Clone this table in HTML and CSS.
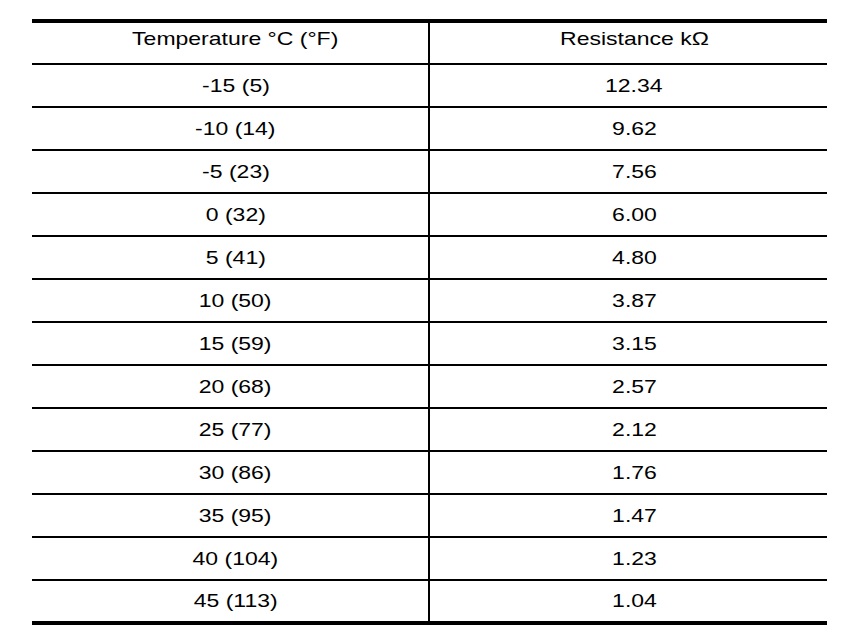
FILE: index.html
```html
<!DOCTYPE html>
<html>
<head>
<meta charset="utf-8">
<link rel="stylesheet" href="styles.css">
</head>
<body>
<table class="spec">
  <thead>
    <tr><th><span class="t">Temperature °C (°F)</span></th><th><span class="t">Resistance kΩ</span></th></tr>
  </thead>
  <tbody>
    <tr><td><span class="t">-15 (5)</span></td><td><span class="t">12.34</span></td></tr>
    <tr><td><span class="t">-10 (14)</span></td><td><span class="t">9.62</span></td></tr>
    <tr><td><span class="t">-5 (23)</span></td><td><span class="t">7.56</span></td></tr>
    <tr><td><span class="t">0 (32)</span></td><td><span class="t">6.00</span></td></tr>
    <tr><td><span class="t">5 (41)</span></td><td><span class="t">4.80</span></td></tr>
    <tr><td><span class="t">10 (50)</span></td><td><span class="t">3.87</span></td></tr>
    <tr><td><span class="t">15 (59)</span></td><td><span class="t">3.15</span></td></tr>
    <tr><td><span class="t">20 (68)</span></td><td><span class="t">2.57</span></td></tr>
    <tr><td><span class="t">25 (77)</span></td><td><span class="t">2.12</span></td></tr>
    <tr><td><span class="t">30 (86)</span></td><td><span class="t">1.76</span></td></tr>
    <tr><td><span class="t">35 (95)</span></td><td><span class="t">1.47</span></td></tr>
    <tr><td><span class="t">40 (104)</span></td><td><span class="t">1.23</span></td></tr>
    <tr class="last"><td><span class="t">45 (113)</span></td><td><span class="t">1.04</span></td></tr>
  </tbody>
</table>
</body>
</html>
```

FILE: styles.css
```css
html, body {
  margin: 0;
  padding: 0;
  background: #ffffff;
}

body {
  font-family: "Liberation Sans", Arial, sans-serif;
  font-size: 19px;
  color: #000000;
}

.spec {
  margin: 19px 0 0 32px;
  width: 795px;
  table-layout: fixed;
  border-collapse: separate;
  border-spacing: 0;
}

.spec th,
.spec td {
  box-sizing: border-box;
  padding: 0 0 0 11px;
  text-align: center;
  font-weight: normal;
  line-height: 41px;
  border-bottom: 2px solid #000;
  white-space: nowrap;
}

.spec th:first-child,
.spec td:first-child {
  width: 398px;
  border-right: 2px solid #000;
}

.spec th:last-child,
.spec td:last-child {
  width: 397px;
}

.spec th {
  border-top: 4px solid #000;
  line-height: 31px;
  padding-bottom: 9px;
}

.spec tr.last td {
  line-height: 40px;
  border-bottom: 4px solid #000;
}

.t {
  display: inline-block;
  transform: scaleX(1.21);
}
```
